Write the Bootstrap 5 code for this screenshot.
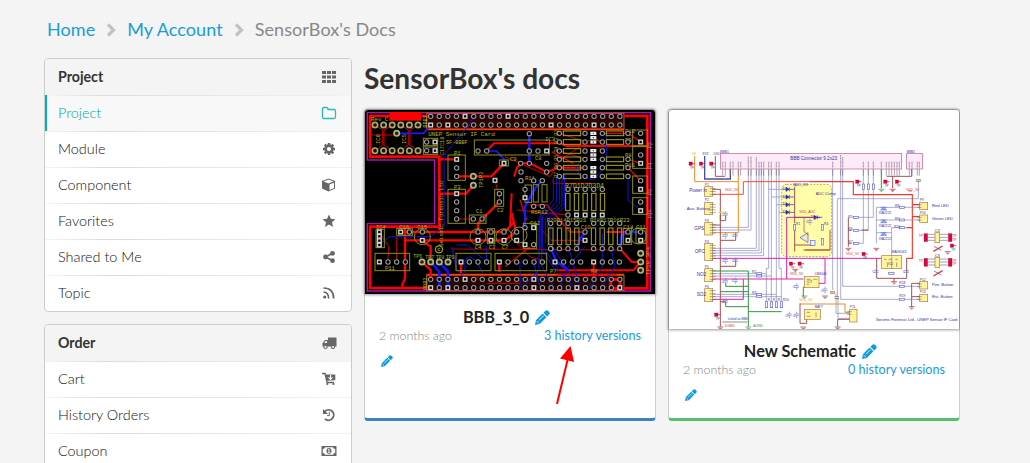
<!DOCTYPE html>
<html lang="en">
<head>
<meta charset="utf-8">
<title>SensorBox's Docs</title>
<link href="https://cdn.jsdelivr.net/npm/bootstrap@5.3.0/dist/css/bootstrap.min.css" rel="stylesheet">
<style>
body{background:#f4f4f4;font-family:Lato,"Liberation Sans",sans-serif;font-size:15px;color:#333}
a{color:#1a9cd8;text-decoration:none}
.page-wrap{width:916px;margin-left:44px;height:463px;overflow:hidden}
.crumbs{height:58px;padding:16px 0 0 3px;font-size:18px;gap:10px;color:#888;letter-spacing:.07px}
.crumbs svg{width:12px;height:16px;margin-top:6px}
.side-col{width:308px}
.side-menu{background:#fff;border:1px solid #ccc;border-radius:4px;overflow:hidden}
.side-row{height:36px;padding:0 14px 0 13px;position:relative;color:#111;font-weight:300;font-size:14.4px}
.side-row svg{width:16px;height:16px;fill:#666;stroke:none}
.side-row+.side-row::before{content:"";position:absolute;left:0;right:0;top:0;height:1px;background:linear-gradient(90deg,#f4f4f4,#ddd 20%,#f2f2f2)}
.side-head{background:#f4f4f4;font-weight:700;font-size:14.2px;color:#333}
.side-active{background:#f8f8f8;color:#00a59d}
.side-active::after{content:"";position:absolute;left:0;top:0;bottom:0;width:2px;background:#00b5ad}
.doc-title{font-size:28.1px;font-weight:700;line-height:40px;margin:0 0 11px}
.doc-card{width:292px;height:312px;background:#fff;border:1px solid #ccc;border-bottom:3px solid #3b83c0;border-radius:4px}
.doc-green{border-bottom-color:#5bbd72}
.thumb{display:block;width:290px;border-radius:3px 3px 0 0;box-shadow:0 0 3px 1px rgba(0,0,0,.4);font-family:"Liberation Sans",sans-serif}
.doc-name{font-size:16.300px;font-weight:700;line-height:24px;color:#222;gap:6px}
.doc-meta{font-size:12.600px;line-height:18px;padding:0 14px;margin-top:-2px}
.ago{color:#888;font-weight:300;font-size:12.400px}
.pencil{fill:#0f9bdb}
.small-pen{margin:10px 0 0 16px}
.pointer{position:absolute;left:550px;top:342px}
</style>
</head>
<body>
<svg width="0" height="0" class="position-absolute">
<symbol id="pen" viewBox="0 0 16 16"><path d="M0 16l1-5 7.2-7.2 4 4L5 15zM9 3l1.900-1.900q1.600-1.600 3.200 0l.8.8q1.600 1.600 0 3.200L13 7z"/><path d="M1.900 12l2.100 2.100M4.200 11l5-5" stroke="#fff" stroke-width=".9"/></symbol>
<symbol id="chev" viewBox="0 0 12 16"><path d="M3 2.500l5.500 5.500L3 13.500" fill="none" stroke="#c2c2c2" stroke-width="3.200"/></symbol>
</svg>
<main class="page-wrap">
<nav class="crumbs d-flex align-items-start">
<a href="#">Home</a><svg><use href="#chev"/></svg><a href="#">My Account</a><svg><use href="#chev"/></svg><span>SensorBox's Docs</span>
</nav>
<div class="d-flex">
<aside class="side-col d-flex flex-column">
<div class="side-menu">
<div class="side-row side-head d-flex align-items-center justify-content-between">Project<svg viewBox="0 0 16 16"><path d="M1 2h4v3H1zM6 2h4v3H6zM11 2h4v3h-4zM1 6.500h4v3H1zM6 6.500h4v3H6zM11 6.500h4v3h-4zM1 11h4v3H1zM6 11h4v3H6zM11 11h4v3h-4z"/></svg></div>
<div class="side-row side-active d-flex align-items-center justify-content-between">Project<svg viewBox="0 0 16 16"><path d="M1.500 4q0-1.500 1.500-1.500h2.500Q7 2.500 7 4v.5h6q1.500 0 1.500 1.500v6q0 1.500-1.500 1.500H3q-1.500 0-1.500-1.500z" fill="none" stroke="#25bbb4" stroke-width="1.300"/></svg></div>
<div class="side-row d-flex align-items-center justify-content-between">Module<svg viewBox="0 0 16 16"><circle cx="8" cy="8" r="3.400" fill="none" stroke="#666" stroke-width="2.700"/><path d="M8 2v2M8 12v2M2 8h2M12 8h2M3.700 3.700l1.500 1.500M10.800 10.800l1.500 1.500M12.300 3.700l-1.500 1.500M5.200 10.800l-1.500 1.500" stroke="#666" stroke-width="2.500"/></svg></div>
<div class="side-row d-flex align-items-center justify-content-between">Component<svg viewBox="0 0 16 16"><path d="M7.500 1.500L14 4v7.500l-6.500 3L1 11.500V4z"/><path d="M2.500 4.400l5-1.900 5 1.900-5 2zM8.500 7.600l4.500-1.900v5.200l-4.500 2z" fill="#fff"/></svg></div>
<div class="side-row d-flex align-items-center justify-content-between">Favorites<svg viewBox="0 0 16 16"><path d="M8 1.500l1.900 4.300 4.500.4-3.400 3.100 1 4.700-4-2.500L4 14l1-4.700-3.400-3.100 4.500-.4z"/></svg></div>
<div class="side-row d-flex align-items-center justify-content-between">Shared to Me<svg viewBox="0 0 16 16"><path d="M12 4L4.500 8 12 12" fill="none" stroke="#666" stroke-width="1.700"/><circle cx="11.500" cy="4.300" r="2.400"/><circle cx="4.500" cy="8" r="2.400"/><circle cx="11.500" cy="11.700" r="2.400"/></svg></div>
<div class="side-row d-flex align-items-center justify-content-between">Topic<svg viewBox="0 0 16 16"><path d="M2.500 7q5 .3 5.200 6.500M2.500 3Q12.500 3 12.700 13.500" fill="none" stroke="#666" stroke-width="1.700"/><circle cx="3.700" cy="12" r="1.600"/></svg></div>
</div>
<div class="side-menu" style="margin-top:12px">
<div class="side-row side-head d-flex align-items-center justify-content-between">Order<svg viewBox="0 0 16 16"><path d="M7 2.500h8.500v9H1.500V8L4 5h3z"/><path d="M3 8l1.700-2H6v2z" fill="#f4f4f4"/><circle cx="4.500" cy="12" r="1.700" fill="#ddd" stroke="#666"/><circle cx="12" cy="12" r="1.700" fill="#ddd" stroke="#666"/></svg></div>
<div class="side-row d-flex align-items-center justify-content-between">Cart<svg viewBox="0 0 16 16"><path d="M1 2.500h3l2 9h7" fill="none" stroke="#666" stroke-width="1.300"/><path d="M4.500 3.500h9.800v5.700L6 9.800z"/><path d="M9.500 4v4.500M7.500 6.400l2 2 2-2" fill="none" stroke="#fff" stroke-width="1.100"/><circle cx="6.300" cy="13" r="1.100"/><circle cx="12.400" cy="13" r="1.100"/></svg></div>
<div class="side-row d-flex align-items-center justify-content-between">History Orders<svg viewBox="0 0 16 16"><path d="M4 4.200A5.200 5.200 0 1 1 4 11.900" fill="none" stroke="#666" stroke-width="1.900"/><path d="M2 2v5h5z"/><path d="M8.300 5v3.600H6" fill="none" stroke="#666"/></svg></div>
<div class="side-row d-flex align-items-center justify-content-between">Coupon<svg viewBox="0 0 16 16"><path d="M.5 3h15v10H.5z"/><path d="M4 4.300h8q0 1.700 2.200 1.700v4Q12 10 12 11.700H4Q4 10 1.800 10V6Q4 6 4 4.300z" fill="#fff"/><ellipse cx="8" cy="8" rx="2.500" ry="3"/><path d="M7 6.800l1-.6v3.300M6.800 9.700h2.600" stroke="#fff" stroke-width=".9" fill="none"/></svg></div>
</div>
</aside>
<section style="margin-left:12px">
<h1 class="doc-title">SensorBox's docs</h1>
<div class="d-flex">
<article class="doc-card">
<svg class="thumb" height="184" viewBox="15 30 870 552" id="pcb"></svg>
<div class="doc-name d-flex justify-content-center align-items-center" style="padding:11px 7px 0 0">BBB_3_0 <svg class="pencil" width="15" height="15"><use href="#pen"/></svg></div>
<div class="doc-meta d-flex justify-content-between"><span class="ago">2 months ago</span><a href="#">3 history versions</a></div>
<svg class="pencil d-block small-pen" width="12" height="12"><use href="#pen"/></svg>
</article>
<article class="doc-card doc-green" style="margin-left:12px">
<svg class="thumb" height="219" viewBox="27 30 870 657" id="sch"></svg>
<div class="doc-name d-flex justify-content-center align-items-center" style="padding:10px 7px 0 0">New Schematic <svg class="pencil" width="15" height="15"><use href="#pen"/></svg></div>
<div class="doc-meta d-flex justify-content-between"><span class="ago">2 months ago</span><a href="#">0 history versions</a></div>
<svg class="pencil d-block small-pen" width="12" height="12"><use href="#pen"/></svg>
</article>
</div>
</section>
</div>
</main>
<svg class="pointer" width="30" height="66" viewBox="550 342 30 66"><path d="M557 404l11-46" stroke="#f00" stroke-width="2"/><path d="M570.500 346l3.500 16-14-3.500z" fill="#f00"/></svg>
<script>
const path=(d,c,w,f='none',x='')=>`<path d="${d}" stroke="${c}" stroke-width="${w}" fill="${f}" ${x}/>`;
const box=(x,y,w,h,c,s=3,f='none')=>`<rect x="${x}" y="${y}" width="${w}" height="${h}" stroke="${c}" stroke-width="${s}" fill="${f}"/>`;
const txt=(x,y,t,s,c,x2='')=>`<text x="${x}" y="${y}" font-size="${s}" fill="${c}" ${x2}>${t}</text>`;

/* ---- circuit board ---- */
const Y='#8c8c1c';
let o=box(15,30,870,552,'none',0,'#000');
o+=path('M22 38H871V573H22V371H224V180H22Z','#b010b8',4);
// copper pours
o+=box(200,40,592,48,'#aa6a20',3,'#2c0505')+box(200,525,592,47,'#aa6a20',3,'#210505');
o+=path('M200 88H792M200 524H792','#ff3b12',5);
o+=path('M90 48H30V170H238V380H30V564H212','#f00',8);
o+=path('M792 48H862V565H792M752 538H780V565H752Z','#f00',8);
o+='<rect x="88" y="36" width="95" height="26" fill="#f00"/>';
// thick red tracks
o+=path('M185 48H212M238 178H290M238 281H290M290 229H394L432 190M290 281H318L340 256M130 396H435L462 366M135 421H435M135 380V535L125 560M186 421L212 440V486M186 486L212 510V538M354 396V370L418 306M418 486V515M303 486V520M238 360V390M435 421L468 395L455 340','#f00',7);
o+=path('M380 153L402 130H600L620 138H862M462 230L470 205L482 190H510L560 216L598 203H675M590 511H820L842 486M780 446L815 486H842M701 486V538M455 280L450 380M740 396H804M770 524H590','#f00',6);
// thin red tracks
o+=path('M45 75L68 90V135L48 152M97 75L72 90V135L97 152M122 75L145 90V135L122 152M174 75L150 90V135L174 152M30 105H100M83 486L86 440L58 396M110 486V410M290 357H340M275 447L780 450M380 550H480M405 241L420 300M435 170L570 230L600 180L690 120M580 250H700M580 250L578 240M675 421H573L545 390M600 100L675 125M600 153L675 178M440 400L510 470L560 486M470 330L622 345M340 550L354 530','#c80000',3);
o+=path('M510 315H560L630 396H675M480 300L500 360M435 500L510 440M575 155L640 190M700 113L720 125M730 100H805L840 125M805 178L840 190M804 203L840 241','#e00000',4);
// blue tracks
o+=path('M110 100H190L212 75M380 153H410L432 178V190','#1a1aff',5);
o+=path('M212 486L238 515V560M238 486L264 515V560','#1111ff',8);
o+=path('M508 101V190M547 240L525 265L495 320V380M573 446L590 486L625 510M650 446L660 415L675 400M780 446L785 405L804 396H842','#1a1aff',7);
o+=path('M340 52L328 75L252 165V380L212 410H90L60 430M275 440L290 510L320 538M315 520V480L330 470L345 480L370 520M380 486V440M290 435H322L380 486M580 230V300L540 345V440L585 510M590 230V305L548 350V440L600 515L640 560M598 230V310L556 355V430M606 230V315L563 360V440M614 220V320L570 365V430L650 550M545 345V500L580 560M537 355V510L490 560M622 380V430L660 560M675 440L625 500L600 560M727 400V500L690 565M752 440L765 500L725 560M804 229V300L842 332M740 100V195L700 240L660 230L648 200L665 180M480 486V560M520 486L540 560','#1414d4',3);
// silkscreen outlines
o+=[[264,165,52,76],[264,268,52,102],[190,115,43,22],[190,141,43,22],[45,460,104,52],[288,460,105,52],[405,460,155,52],[343,120,225,45],[48,388,25,55],[110,386,47,20],[328,345,50,25],[404,268,27,51],[418,180,27,18],[382,386,22,45],[495,255,20,52],[520,254,15,52],[546,254,15,52],[490,370,40,75],[818,90,45,48],[818,140,45,65],[818,228,45,52],[818,293,45,50],[790,385,25,48],[828,385,30,45]].map(a=>box(...a,Y,3)).join('');
for(const x of [610,739])for(const y of [100,126,153,178,203,229])if(x<700||y!=153)o+=box(x,y-7,52,14,'#a8a820',3);
for(let i=0;i<5;i++)o+=box(617+i*26,280,13,52,'#a8a820',3);
for(const x of [566,592,618,644,694,720,746,772])o+=box(x,384,13,50,'#a8a820',3);
for(const [x,y]of[[187,410],[354,410],[432,410],[477,405],[835,408]])o+=`<circle cx="${x}" cy="${y}" r="24" stroke="${Y}" stroke-width="3" fill="none"/>`;
o+=`<circle cx="237" cy="448" r="11" stroke="#ccc800" stroke-width="3" fill="none"/>`+txt(232,454,'c',18,'#ccc800');
// silkscreen texts
const T=(x,y,t,s=17,r=0)=>txt(x,y,t,s,'#b0b030',`font-family="Liberation Mono" letter-spacing="-.3" transform="rotate(${r} ${x} ${y})"`);
o+=T(33,62,'Rev',18)+T(74,62,'C',18)+T(205,108,'UNEP Sensor IF Card',18)+T(258,132,'SF-BBBF',16)+T(282,165,'P1')+T(282,267,'P3')+T(348,340,'C1')+T(411,335,'C2')+T(75,511,'P11')+T(48,388,'IC4')+T(118,388,'C16')+T(172,388,'C15')+T(160,474,'TP6',15)+T(196,476,'TP7',15)+T(227,476,'TP8',15)+T(257,476,'TP9',15)+T(344,448,'C4')+T(386,448,'C3')+T(425,448,'C7')+T(60,132,'IC6',17,-90)+T(137,132,'IC5',17,-90)+T(252,166,'C17C18',16,-90)+T(368,264,'TP1P2',17,-90)+T(250,440,'Seismic Forensic Ltd',17,-90)+T(200,83,'BBB1',16,-90)+T(200,570,'BBB2',16,-90)+T(555,122,'IC3')+T(450,183,'C9')+T(525,180,'C8')+T(495,240,'R11')+T(513,342,'R6R12')+T(615,263,'R7D1D2D3D4',20)+T(560,367,'R20R14R15R21',17)+T(690,367,'R18R17R16R23',17)+T(790,387,'C14')+T(828,387,'C11')+T(510,375,'C12')+T(662,388,'C10')+T(570,520,'P7')+T(693,520,'P8')+T(795,98,'R10')+T(795,125,'R9')+T(795,170,'R8')+T(795,200,'R16')+T(877,145,'P2',16,-90)+T(877,207,'P4',16,-90)+T(877,285,'P6',16,-90)+T(877,355,'P10',16,-90)+T(870,525,'TP10 3P4',18,-90);
for(const [i,y]of [107,132,157,182,207,233].entries())o+=T(594,y,'R'+(i+2),15,-90);
// pads
const pad=(x,y,sq)=>sq?`<rect x="${x-5.5}" y="${y-5.5}" width="11" height="11" fill="#000" stroke="#d4d4d4" stroke-width="4"/>`:`<circle cx="${x}" cy="${y}" r="6.500" fill="#000" stroke="#9c9c9c" stroke-width="3.200"/>`;
for(let i=0;i<23;i++){const x=212+i*25.800;o+=pad(x,49,i==4||i==9)+pad(x,75,i==0||i==2||i==14||i==19)+pad(x,538,i==4||i==12)+pad(x,563,i==0||i==2||i==12||i==17||i==22)}
for(let i=0;i<6;i++)for(const y of[75,152])o+=`<circle cx="${45+i*25.800}" cy="${y}" r="8" fill="#111" stroke="#a9a96a" stroke-width="5"/>`;
for(const [x,y]of[[110,100],[340,229],[340,256],[186,486],[212,486],[238,486],[264,486],[842,460],[842,486],[842,511]])o+=`<circle cx="${x}" cy="${y}" r="8" fill="#222" stroke="#b5b57c" stroke-width="5"/>`;
const pads=[[200,126],[225,126,1],[200,152],[225,152,1],[290,178,1],[290,204],[290,229],[290,281,1],[290,306],[290,332],[290,357],[340,357],[366,357],[354,153],[380,153],[432,190,1],[405,241,1],[418,281],[418,306],[58,486,1],[84,486],[110,486],[136,486],[58,396,1],[58,409,1],[58,422,1],[58,435,1],[122,396,1],[148,396],[187,396],[187,421,1],[354,396],[354,421,1],[393,396],[393,421,1],[432,396],[432,421,1],[303,486,1],[328,486],[354,486],[380,486],[418,486,1],[444,486],[470,486],[496,486],[522,486],[547,486],[508,101],[508,153],[534,153],[560,153,1],[482,190],[508,190],[560,190],[483,216],[560,216],[483,242],[521,242],[547,242],[495,268],[495,293,1],[521,319],[547,319],[495,383],[521,383,1],[495,434,1],[521,434],[470,396],[470,421,1],[573,446],[585,486,1],[611,486],[637,486],[662,486],[701,486,1],[727,486],[752,486],[778,486],[675,396],[675,421,1],[804,396],[804,421,1],[842,396],[842,421,1],[842,100],[842,126,1],[842,165],[842,190,1],[842,242],[842,268,1],[842,306],[842,332,1]];
for(const p of pads)o+=pad(...p);
for(const y of[100,126,153,178,203,229]){for(const x of[598,675,727,804])if(x!=804||y!=153)o+=pad(x,y)}
for(let i=0;i<5;i++)o+=pad(624+i*25.700,268,0)+pad(624+i*25.700,345,i>0);
for(const x of[572,598,624,650,701,727,753,779])o+=pad(x,370)+pad(x,446);
for(const y of[113,165,216])for(let i=-1;i<2;i++)o+=`<rect x="691" y="${y+i*13-5}" width="18" height="10" fill="#eee"/><circle cx="700" cy="${y+i*13}" r="2" fill="#333"/>`;
document.getElementById('pcb').innerHTML=o;

/* ---- schematic ---- */
const D='#a52a2a', G='#2e9a3c', O='#ff8c1a';
let s=box(27,30,870,660,'none',0,'#fff');
s+=box(181,160,544,47,'#c25a80',2,'#fdebfa')+box(740,160,47,47,'#c25a80',2,'#fdebfa');
s+=`<rect x="365" y="253" width="150" height="217" rx="15" fill="#fffda8" stroke="#888830" stroke-width="2" stroke-dasharray="6 4"/>`;
s+=path('M265 207V382H158M273 207V390H158M289 207V445H158M297 207V452H158M304 207V459H158M311 207V467H158M326 207V268H380M334 207V291H380M349 207V314H380M357 207V337H380M326 268V505H319V605M334 290V605M349 314V505V605M357 337V505H364V605M319 521H158M334 528H158M349 583H158M364 590H158M518 207V570M542 207V598H790M548 207V559H790M532 600V296H775V240M610 207V430H580M625 207V391H580M640 207V352H580M649 322H780M649 360H780M649 398H695M695 383H760M695 383V470M649 322V430M528 580V640H575M534 590V655H575','#8c8cc0',2.200);
s+=path('M134 168V237H211V225M211 207V225','#4550a8',4);
s+=path('M104 168V245H235V398H158M235 207V245M420 612H555V637H570','#f28a28',3);
s+=path('M158 283H250V245H450','#ff4a32',3)+path('M450 245H580V284H757V475H740M757 314H780M757 350H780M757 383H740','#f03a2a',3.500);
s+=path('M166 168V229H195M158 268H181V680M158 375H181M181 421H227V400M181 499H227V480M181 605H197M181 345V362H197V345M420 610V670H440V637M404 260V370M404 390V435H465M680 229H755V207M698 229V265M565 352V440M565 391H575M565 430H575M605 390H625M755 550H780M755 550V620M755 590H780M650 475V535H740V475M702 535V545M575 658H533V680M510 390V450H430M404 435V455','#a04545',2.800);
s+=path('M380 537V352H480M158 475H495M158 537H430M158 598H250V537M495 475V550H470M485 475H665','#e020b0',3);
s+=path('M158 513H265V680M181 575H265M197 550V559H265M197 605V620H265M265 635H365M430 560V590M664 207V265','#329442',3);
// connectors
const con=(x,y,w,h,n)=>{let r=box(x,y,w,h,'#aa7744',2,'#fff49a');for(let i=0;i<n;i++)r+=path(`M${x+w-9} ${y+6+i*(h-12)/(n-1||1)}h18`,'#555',1.500);return r};
for(const a of [[134,260,24,29,3],[134,307,24,37,4],[134,368,24,37,4],[134,430,24,52,6],[134,506,24,39,4],[134,566,24,39,4]])s+=con(...a);
for(const a of[[779,307,24,22],[779,345,24,22],[779,545,24,22],[779,583,24,22],[569,628,22,38]])s+=box(a[0],a[1],a[2],a[3],'#aa7744',2,'#fff49a')+path(`M${a[0]-8} ${a[1]+7}h14m-14 8h14`,'#555',1.500);
for(const a of[[433,530,44,33],[433,628,48,30],[665,467,60,39],[825,398,14,30],[825,472,14,30]])s+=box(...a,'#aa7744',2,'#fff49a');
s+=path('M695 470V506M672 478h8m6 0h8m12 0h8M682 487v14M710 487v14M440 538h12m8 0h12M440 553h8M440 637h10m-10 12h12M468 637v15','#777',2);
// integrated circuits and flags
for(const y of[412,486]){for(const x of[792,865])s+=box(x,y-11,11,24,'#c00040',1,'#d90745');for(const d of[-9,0,9])s+=path(`M803 ${y+d}h22m14 0h26`,'#777',2);s+=path(`M820 ${y+42}l28-16`,'#e34',4)+path(`M822 ${y+27}l22 12`,'#448',2)+txt(877,y-1,'TP',10,'#b03050')+txt(877,y+10,'TP',10,'#b03050')+txt(776,y,'TP',10,'#b03050')+txt(824,y-16,'IC8',10,'#444499')}
for(const [x,y]of[[92,191],[123,191],[154,191],[169,644],[393,491],[419,491],[592,245],[676,245],[711,245],[611,462],[876,437]])s+=box(x-5,y-5,10,10,'#b00038',1,'#e00040')+txt(x-2,y+15,'TP',9,'#446')+path(`M${x+5} ${y}h8`,D,2);
// resistors and diodes
for(const a of[[316,605,7,18],[331,605,7,18],[346,605,7,18],[361,605,7,18],[290,518,15,6],[290,525,15,6],[290,580,15,6],[290,586,15,6],[607,252,6,16],[622,252,6,16],[637,252,6,16],[580,349,15,6],[580,388,15,6],[580,427,15,6],[718,319,15,6],[718,357,15,6],[718,380,15,6],[718,556,15,6],[718,595,15,6],[401,373,6,18],[484,373,6,18],[686,517,16,6],[484,415,6,20],[451,421,14,15]])s+=box(...a,'#6565d6',2,'#f2f2ff');
for(const [x,y]of[[383,268],[383,291],[383,314],[383,337],[467,352]])s+=path(`M${x-5} ${y-6}v12l9-6zM${x+5} ${y-6}v12M${x+5} ${y}h15`,'#2020c8',2,'#2424e0')+txt(x-15,y+2,'D',11,'#223');
for(const y of[330,368,406])s+=path(`M662 ${y}h18l-9-8zM662 ${y-8}h18`,'#5577d8',2,'#99aaff')+txt(656,y+13,'VIA2222',10,'#333399');
// capacitors and grounds
for(const [x,y]of[[197,343],[197,406],[227,406],[197,482],[227,482],[197,544],[227,542],[197,605],[410,560],[410,645],[388,645],[450,365],[495,570],[649,515],[740,515]])s+=path(`M${x} ${y-10}v7m-7 0h14m-14 5h14m-7 0v8`,'#6e7fda',2)+txt(x-12,y+5,'C',10,'#444499');
for(const [x,y,c]of[[181,681,D],[265,681,G],[406,508,D],[433,588,G],[430,681,D],[495,588,D],[533,681,D],[565,445,D],[649,445,D],[664,268,G],[698,268,D],[702,545,D],[755,620,D],[863,455,D]])s+=path(`M${x-9} ${y}h18m-14 4h10m-7 3h4`,c,2);
s+=path('M444 398v30L420 413Z','#5555bb',2,'#e8e8d8')+path('M432 352V395L445 405M436 450H510M465 352V360','#c23232',2);
// pin bundles and labels
const pin=(x)=>path(`M${x} 185v20`,'#9c8a9c',3.500,'none','stroke-dasharray="3 1.500"')+path(`M${x} 207v20`,'#8d7390',2);
for(const x of[188,196,211,219,235,242,265,273,289,297,304,311,326,334,349,357,518,542,548,610,625,640,664,679,687,695,703,711,718,748,756,772,778])s+=pin(x);
s+=path('M265 170v16M273 170v16M289 172v14M542 165v20M548 172v14','#9c8a9c',3.500,'none','stroke-dasharray="3 1.500"');
const L=(x,y,t,z=14,c='#3232a0')=>txt(x,y,t,z,c);
s+=L(88,275,'Power In',13.500)+L(80,329,'Aux. Battery',13)+L(103,391,'GPS')+L(104,460,'OPC')+L(110,528,'NO2')+L(110,589,'SO2')+L(391,179,'BBB Connector 9 2x23',13.800)+L(467,286,'ADC Clamp',11.500)+L(816,321,'Red LED',12.500)+L(816,359,'Green LED',12.500)+L(816,559,'Pwr. Button',12.500)+L(816,593,'Rst. Button',12.500)+`<text x="648" y="662" font-size="12.500" fill="#3232a0" textLength="244">Seismic Forensic Ltd - UNEP Sensor IF Card</text>`+L(181,159,'BBB1',10)+L(740,159,'BBB2',10)+L(96,165,'5V',10,O)+L(127,165,'3V3',10)+L(160,165,'GND',9,'#947')+L(195,273,'VDD_5V',10,'#c33')+L(398,259,'VADC_1V8',9)+L(418,340,'VDD_ADC',10,'#b33')+L(738,273,'VDD_5V',10,'#d33')+L(558,465,'VDD_5V',10,'#d33')+L(390,525,'VDD_5V',10,'#b33')+L(418,603,'VDD_5V',10,O)+L(203,660,'Linked on BBB',9)+L(195,681,'DGND',10,'#b33')+L(280,681,'AGND',10,G)+L(695,459,'MAX6043',10)+L(464,525,'LM4040',10)+L(464,625,'BATT',10)+L(441,549,'IC7',10)+L(684,496,'IC1',10);
for(const [i,y]of [258,304,366,428,504,564].entries())s+=L(134,y,'P'+(i+1),10);
for(const [x,y,t]of[[565,353,'R5'],[565,391,'R6'],[565,429,'R7'],[705,321,'R8'],[705,360,'R9'],[703,384,'R10'],[718,552,'R18'],[718,590,'R19'],[779,303,'P9'],[779,342,'P10'],[779,543,'P12'],[779,580,'P13'],[569,625,'P11'],[408,376,'R1'],[492,375,'R4'],[323,603,'R'],[338,603,'R'],[353,603,'R'],[368,603,'R16'],[276,519,'R2'],[276,582,'R3']])s+=L(x,y,t,10,'#333388');
s+=path('M187 666H262M400 352H450M745 273H756','#555',2)+path('M175 337h22','#e8d800',3);
s+=box(770,239,11,5,'#864',2,'#edb')+box(512,575,11,5,'#864',2,'#edb')+box(525,590,11,5,'#864',2,'#edb');
document.getElementById('sch').innerHTML=s;
</script>
<script src="https://cdn.jsdelivr.net/npm/bootstrap@5.3.0/dist/js/bootstrap.bundle.min.js"></script>
</body>
</html>
